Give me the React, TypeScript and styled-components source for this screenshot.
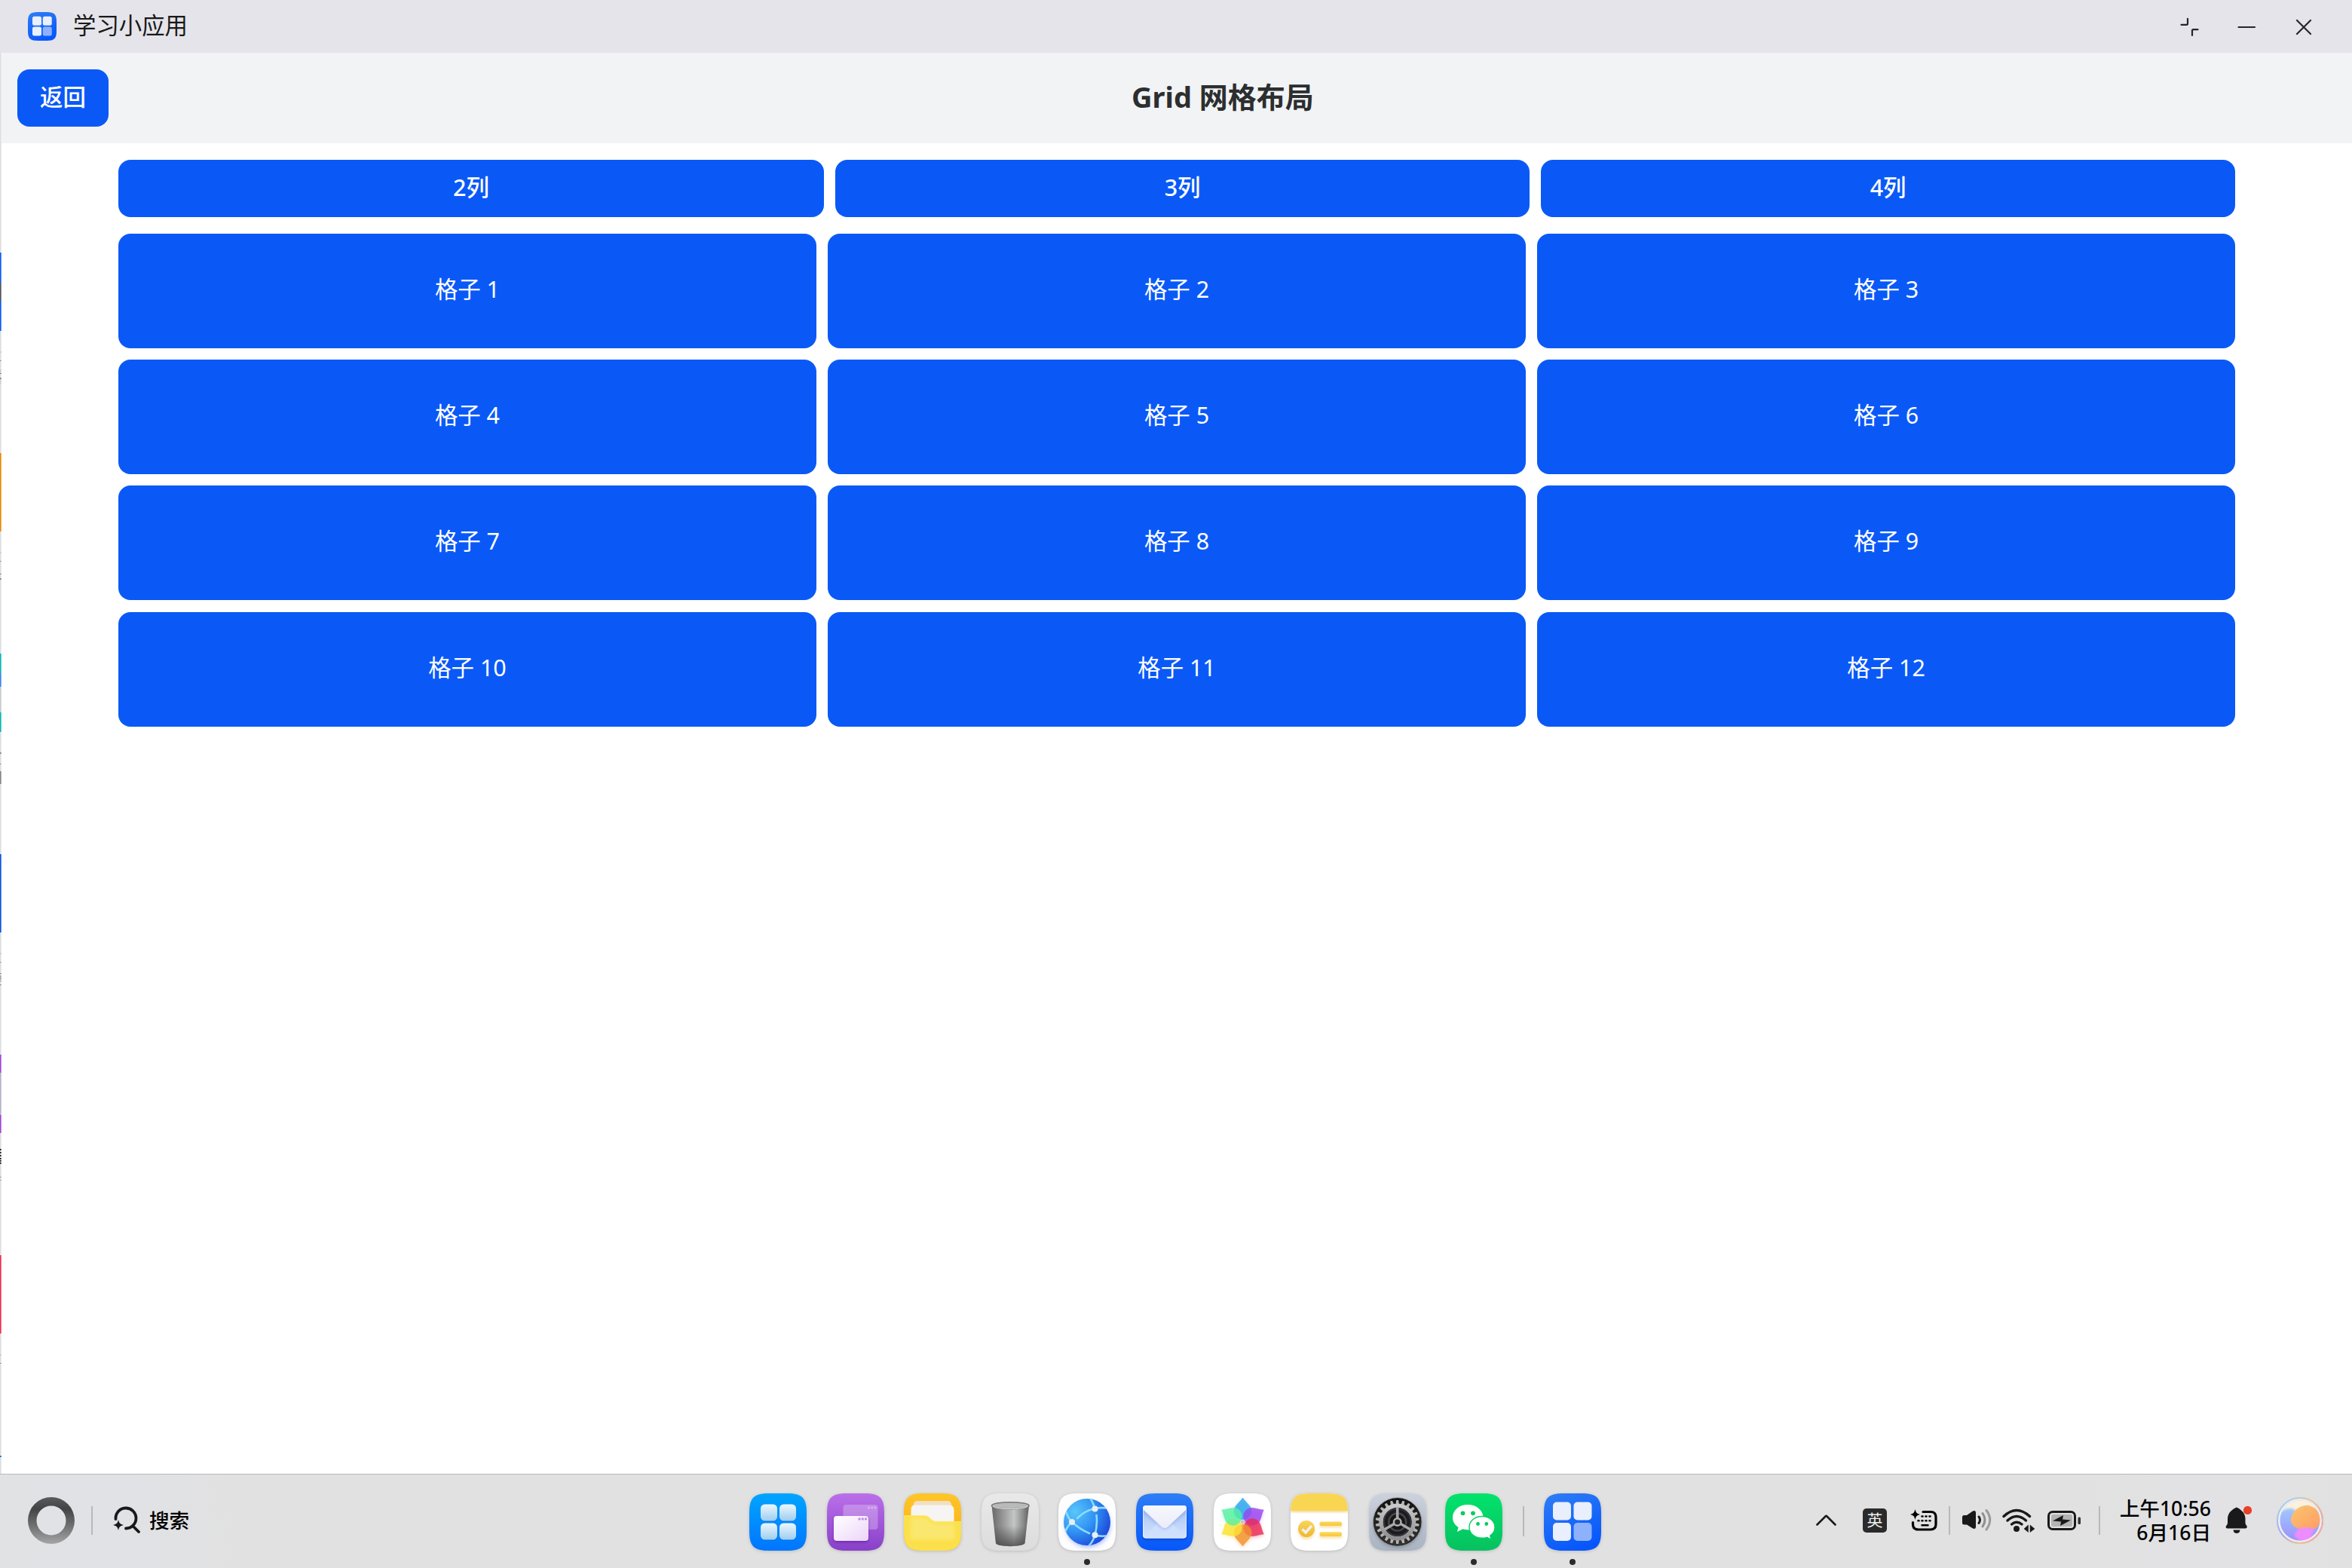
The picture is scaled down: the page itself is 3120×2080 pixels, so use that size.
import React from 'react';
import styled, { createGlobalStyle } from 'styled-components';

const BLUE = '#0a59f7';

const GlobalStyle = createGlobalStyle`
  * { box-sizing: border-box; }
  html, body { margin: 0; padding: 0; }
  body {
    font-family: 'Noto Sans', 'Noto Sans CJK SC', sans-serif;
    background: #fff;
    overflow: hidden;
  }
  svg { display: block; flex: none; }
`;

const Desktop = styled.div`
  width: 3120px;
  height: 2080px;
  display: flex;
  flex-direction: column;
  background: #fff;
`;

const TitleBar = styled.header`
  height: 70px;
  flex: none;
  display: flex;
  align-items: center;
  padding: 0 50px 0 37px;
  background: #e5e4ea;
`;

const AppName = styled.span`
  margin-left: 22px;
  font-size: 30.4px;
  line-height: 40px;
  color: #191919;
  padding-bottom: 3px;
`;

const WindowControls = styled.div`
  margin-left: auto;
  display: flex;
  align-items: center;
  gap: 48px;
  padding-top: 2px;
`;

const WindowBody = styled.div`
  flex: 1;
  min-height: 0;
  display: flex;
`;

const EdgeStrip = styled.div`
  width: 2px;
  flex: none;
  display: flex;
  flex-direction: column;
  background: linear-gradient(to right, #dcdddf 1px, #ebebec 1px);
`;

const EdgeSegment = styled.div<{ $gap: number; $size: number; $color: string }>`
  flex: none;
  margin-top: ${(p) => p.$gap}px;
  height: ${(p) => p.$size}px;
  background: linear-gradient(to right, transparent 1px, rgba(255, 255, 255, 0.35) 1px), ${(p) => p.$color};
`;

const Page = styled.main`
  flex: 1;
  min-width: 0;
  display: flex;
  flex-direction: column;
`;

const PageHeader = styled.div`
  height: 120px;
  flex: none;
  display: flex;
  align-items: center;
  padding: 0 20px 0 21px;
  background: #f1f3f5;
`;

const Button = styled.button<{ $width?: string }>`
  width: ${(p) => p.$width ?? 'auto'};
  height: 76px;
  border: 0;
  border-radius: 16px;
  padding: 0 0 3px;
  background: ${BLUE};
  color: #fff;
  font: 500 30.4px/40px 'Noto Sans', 'Noto Sans CJK SC', sans-serif;
`;

const PageTitle = styled.h1`
  flex: 1;
  margin: 0;
  padding-bottom: 4px;
  text-align: center;
  font-size: 38px;
  line-height: 52px;
  font-weight: 700;
  color: #2c2e2f;
`;

const Content = styled.div`
  padding: 22px 155px 0 155px;
  display: flex;
  flex-direction: column;
  gap: 22px;
`;

const ColumnPicker = styled.div`
  display: grid;
  grid-template-columns: 936px 1fr 1fr;
  column-gap: 15.2px;
`;

const CellGrid = styled.div`
  display: grid;
  grid-template-columns: repeat(3, 1fr);
  grid-auto-rows: 152px;
  gap: 15.2px;
`;

const Cell = styled.div`
  display: flex;
  align-items: center;
  justify-content: center;
  padding-bottom: 4px;
  border-radius: 16px;
  background: ${BLUE};
  color: #fff;
  font-size: 30.4px;
  line-height: 40px;
`;

const Taskbar = styled.footer`
  height: 125px;
  flex: none;
  display: grid;
  grid-template-columns: 994px 1130px 1fr;
  border-top: 1px solid #b9b9bb;
  background: linear-gradient(to right, #e1e2e4 0, #e1e2e6 160px, #e1e1e1 320px, #e1e1e1 2740px, #e2e2e4 2900px, #e2e2e4 3000px, #e1e1e1 3120px);
`;

const TaskbarStart = styled.div`
  display: flex;
  align-items: center;
  padding: 0 0 2px 36px;
`;

const SearchLabel = styled.span`
  margin-left: 11px;
  font-size: 26.6px;
  line-height: 36px;
  font-weight: 500;
  color: #000;
`;

const Divider = styled.div<{ $height?: number; $top?: number; $left?: number; $right?: number }>`
  width: 2px;
  flex: none;
  height: ${(p) => p.$height ?? 38}px;
  margin: ${(p) => `${p.$top ?? 0}px ${p.$right ?? 0}px 0 ${p.$left ?? 0}px`};
  background: #b8b8ba;
`;

const Dock = styled.nav`
  display: flex;
  align-items: flex-start;
  padding-top: 25px;
`;

const DockItem = styled.div<{ $last?: boolean }>`
  width: 76px;
  flex: none;
  margin-right: ${(p) => (p.$last ? 0 : 26.6)}px;
  display: flex;
  flex-direction: column;
  align-items: center;
  svg { overflow: visible; filter: drop-shadow(0 1px 2px rgba(0, 0, 0, 0.16)); }
`;

const RunningDot = styled.i`
  width: 8px;
  height: 8px;
  margin-top: 11px;
  border-radius: 50%;
  background: #2b2b2b;
`;

const Tray = styled.div`
  display: flex;
  align-items: center;
  padding: 0 37px 2px 285px;
`;

const TrayItem = styled.div<{ $left: number }>`
  flex: none;
  margin-left: ${(p) => p.$left}px;
`;

const ImeBadge = styled.div`
  width: 32px;
  height: 32px;
  border-radius: 5px;
  background: #2a2a2a;
  color: #f0f0f0;
  font-size: 21px;
  line-height: 31px;
  text-align: center;
`;

const Clock = styled.div`
  width: 147px;
  flex: none;
  margin-right: 1px;
  text-align: right;
  font-size: 26.6px;
  line-height: 32px;
  font-weight: 500;
  color: #000;
  white-space: nowrap;
`;

const SQUIRCLE =
  'M0 26C0 6 6 0 26 0H50C70 0 76 6 76 26V50C76 70 70 76 50 76H26C6 76 0 70 0 50Z';

function Gradient({ id, from, to, diagonal }: { id: string; from: string; to: string; diagonal?: boolean }) {
  return (
    <linearGradient id={id} x1="0" y1="0" x2={diagonal ? 1 : 0} y2="1">
      <stop offset="0" stopColor={from} />
      <stop offset="1" stopColor={to} />
    </linearGradient>
  );
}

function LearningIcon({ size, id }: { size: number; id: string }) {
  return (
    <svg width={size} height={size} viewBox="0 0 76 76">
      <defs>
        <linearGradient id={id} x1="0.2" y1="0" x2="0.6" y2="1">
          <stop offset="0" stopColor="#2d7bf5" />
          <stop offset="1" stopColor="#0656fb" />
        </linearGradient>
      </defs>
      <path d={SQUIRCLE} fill={`url(#${id})`} />
      <g fill="#e9effd">
        <rect x="12" y="11.5" width="24" height="24" rx="5" />
        <rect x="39.5" y="11.5" width="24" height="24" rx="5" />
        <rect x="12" y="39" width="24" height="24" rx="5" />
        <rect x="39.5" y="39" width="24" height="24" rx="5" fill="#8db2fb" />
      </g>
    </svg>
  );
}

function LauncherIcon() {
  return (
    <svg width="76" height="76" viewBox="0 0 76 76">
      <defs>
        <Gradient id="launch-bg" from="#00a5ff" to="#0075ff" />
        <Gradient id="launch-tile" from="#edf7fd" to="#9ccdf0" />
      </defs>
      <path d={SQUIRCLE} fill="url(#launch-bg)" />
      {[15, 40].map((x) =>
        [14.5, 39.5].map((y) => (
          <g key={`${x}-${y}`}>
            <rect x={x} y={y + 1.5} width="22" height="22" rx="5.5" fill="#0060d8" opacity="0.3" />
            <rect x={x} y={y} width="22" height="22" rx="5.5" fill="url(#launch-tile)" />
          </g>
        )),
      )}
    </svg>
  );
}

function WindowsIcon() {
  return (
    <svg width="76" height="76" viewBox="0 0 76 76">
      <defs>
        <Gradient id="win-bg" from="#bb70ea" to="#8840c8" />
        <Gradient id="win-front" from="#ffffff" to="#ecd4f8" diagonal />
        <filter id="win-blur" x="-20%" y="-20%" width="140%" height="150%">
          <feGaussianBlur stdDeviation="1.5" />
        </filter>
      </defs>
      <path d={SQUIRCLE} fill="url(#win-bg)" />
      <rect x="21.5" y="15" width="46" height="33" rx="4" fill="#fff" opacity="0.25" />
      <g fill="#fff" opacity="0.3">
        <circle cx="55.5" cy="19" r="1.7" /><circle cx="59.8" cy="19" r="1.7" /><circle cx="64" cy="19" r="1.7" />
      </g>
      <rect x="9" y="32" width="46" height="33" rx="4" fill="#5b1a9c" opacity="0.6" filter="url(#win-blur)" />
      <rect x="9" y="30" width="46" height="33" rx="4" fill="url(#win-front)" />
      <g fill="#c08ae6">
        <circle cx="43" cy="34" r="1.7" /><circle cx="47.3" cy="34" r="1.7" /><circle cx="51.5" cy="34" r="1.7" />
      </g>
    </svg>
  );
}

function FilesIcon() {
  return (
    <svg width="76" height="76" viewBox="0 0 76 76">
      <defs>
        <Gradient id="file-bg" from="#ffc526" to="#f9ac18" />
        <clipPath id="file-clip"><path d={SQUIRCLE} /></clipPath>
        <filter id="file-blur"><feGaussianBlur stdDeviation="2.5" /></filter>
      </defs>
      <g clipPath="url(#file-clip)">
        <rect width="76" height="76" fill="url(#file-bg)" />
        <path d="M12 20C12.500 12 14 10 18 10H58C62 10 63 13 63.500 17V30H12Z" fill="#f1dfc4" />
        <path d="M9.500 21Q9.500 15.500 15 15.500H60Q66.500 15.500 66.500 22V50H9.500Z" fill="#f6f5f3" />
        <path d="M0 29.500H27C35 29.500 35 37.500 42 37.500H76V76H0Z" fill="#fbe04b" />
        <path d="M9 32H27C33 32 34 40 42 40H67V61H9Z" fill="#fbe978" opacity="0.8" filter="url(#file-blur)" />
        <path d="M0 29.800H27C35 29.800 35 37.800 42 37.800H76" fill="none" stroke="#fdea5c" strokeWidth="1.2" />
      </g>
    </svg>
  );
}

function TrashIcon() {
  return (
    <svg width="76" height="76" viewBox="0 0 76 76">
      <defs>
        <linearGradient id="bin-body" x1="0" x2="1">
          <stop offset="0" stopColor="#686868" /><stop offset="0.25" stopColor="#8f8f8f" />
          <stop offset="0.6" stopColor="#c4c5c5" /><stop offset="0.85" stopColor="#8a8a8a" />
          <stop offset="1" stopColor="#606060" />
        </linearGradient>
        <linearGradient id="bin-shade" x1="0" y1="0" x2="0" y2="1">
          <stop offset="0.5" stopColor="#444" stopOpacity="0" /><stop offset="1" stopColor="#444" stopOpacity="0.8" />
        </linearGradient>
        <Gradient id="bin-bg" from="#e9e9e9" to="#dcdcdc" />
      </defs>
      <path d={SQUIRCLE} fill="url(#bin-bg)" />
      <path d="M13.500 16L19 66C20 71.500 56 71.500 57.500 66L63 16Z" fill="url(#bin-body)" />
      <path d="M13.500 16L19 66C20 71.500 56 71.500 57.500 66L63 16Z" fill="url(#bin-shade)" />
      <ellipse cx="38.300" cy="16.300" rx="24.800" ry="4.600" fill="#b9b9b9" stroke="#77777b" strokeWidth="1.600" />
      <path d="M15 17C20 22 56 22 61.500 17" fill="none" stroke="#e6e6e6" strokeWidth="1" />
    </svg>
  );
}

function BrowserIcon() {
  return (
    <svg width="76" height="76" viewBox="0 0 76 76">
      <defs>
        <radialGradient id="globe" cx="0.24" cy="0.28" r="0.85">
          <stop offset="0" stopColor="#5ac6fb" /><stop offset="0.5" stopColor="#3193f4" /><stop offset="1" stopColor="#1c45d8" />
        </radialGradient>
        <clipPath id="globe-clip"><circle cx="38" cy="38" r="31" /></clipPath>
        <filter id="globe-blur" x="-30%" y="-30%" width="160%" height="160%"><feGaussianBlur stdDeviation="3" /></filter>
        <clipPath id="globe-tile"><path d={SQUIRCLE} /></clipPath>
      </defs>
      <path d={SQUIRCLE} fill="#fdfdfd" />
      <g clipPath="url(#globe-tile)">
        <circle cx="39" cy="42" r="29" fill="#5a7cff" opacity="0.6" filter="url(#globe-blur)" />
      </g>
      <circle cx="38" cy="38" r="31" fill="url(#globe)" />
      <g clipPath="url(#globe-clip)" fill="none" stroke="#8adcfb" strokeWidth="2.600" strokeLinecap="round">
        <path d="M25 33Q35 23 47 20.500Q58 18 66 20" />
        <path d="M42 6Q46 12 48.500 20" />
        <path d="M10 24Q13 33 18 38Q29 48 41 53" />
        <path d="M18 38Q12 43 9 51" />
        <path d="M50.500 29Q52 42 48.500 55Q46 64 40 70" />
        <path d="M48.500 55Q56 58 66 56" />
      </g>
      <g fill="#e9eef2"><circle cx="48.500" cy="20.500" r="4" /><circle cx="18" cy="38" r="4" /><circle cx="48.500" cy="55.300" r="4" /></g>
    </svg>
  );
}

function MailIcon() {
  return (
    <svg width="76" height="76" viewBox="0 0 76 76">
      <defs>
        <Gradient id="mail-bg" from="#2e7ef6" to="#0657fa" />
        <Gradient id="mail-body" from="#a4bff6" to="#d5e5fc" />
        <Gradient id="mail-flap" from="#f7f8fd" to="#ebecf7" />
        <clipPath id="mail-clip"><rect x="9" y="16" width="58" height="43.500" rx="4" /></clipPath>
        <filter id="mail-blur" x="-20%" y="-20%" width="140%" height="150%"><feGaussianBlur stdDeviation="1.500" /></filter>
      </defs>
      <path d={SQUIRCLE} fill="url(#mail-bg)" />
      <rect x="9" y="18" width="58" height="43.500" rx="4" fill="#0136b8" opacity="0.6" filter="url(#mail-blur)" />
      <g clipPath="url(#mail-clip)">
        <rect x="9" y="16" width="58" height="44" fill="url(#mail-body)" />
        <path d="M9 59.500L31 37H45L67 59.500Z" fill="#cfe0fc" />
        <path d="M8 25L33 46.500Q38 50 43 46.500L68 25V20H8Z" fill="#7f9de8" opacity="0.35" filter="url(#mail-blur)" />
        <path d="M8 16H68V20L43 43.500Q38 48.500 33 43.500L8 20Z" fill="url(#mail-flap)" />
      </g>
      <rect x="9.500" y="16.500" width="57" height="42.500" rx="3.500" fill="none" stroke="#eaf1ff" strokeOpacity="0.8" />
    </svg>
  );
}

function GalleryIcon() {
  const petals = ['#28a5ee', '#9a45ee', '#ea2c56', '#f3922c', '#fbe234', '#58f0a4'];
  const petal =
    'M38.500 6C40.500 9.500 44.500 12.500 47.500 16.500C53 24 49 34.500 38.500 34.500C28 34.500 24 24 29.500 16.500C32.500 12.500 36.500 9.500 38.500 6Z';
  return (
    <svg width="76" height="76" viewBox="0 0 76 76">
      <defs>
        <filter id="petal-glow" x="-30%" y="-30%" width="160%" height="160%"><feGaussianBlur stdDeviation="2.500" /></filter>
      </defs>
      <path d={SQUIRCLE} fill="#fff" />
      <g opacity="0.35" filter="url(#petal-glow)" transform="translate(0 2)">
        {petals.map((c, i) => <path key={c} d={petal} fill={c} transform={`rotate(${i * 60} 38.500 38)`} />)}
      </g>
      {petals.map((c, i) => (
        <path key={c} d={petal} fill={c} fillOpacity="0.8" stroke={c} strokeOpacity="0.5" strokeWidth="1" strokeLinejoin="round" transform={`rotate(${i * 60} 38.500 38)`} />
      ))}
      <circle cx="38.500" cy="38" r="2.800" fill="#d5c3ba" />
    </svg>
  );
}

function NotesIcon() {
  return (
    <svg width="76" height="76" viewBox="0 0 76 76">
      <defs>
        <clipPath id="note-clip"><path d={SQUIRCLE} /></clipPath>
        <Gradient id="note-dot" from="#f9d75a" to="#f0b631" />
        <Gradient id="note-line" from="#fbd95a" to="#f8c63c" />
        <filter id="note-blur" x="-30%" y="-60%" width="160%" height="300%"><feGaussianBlur stdDeviation="1.800" /></filter>
      </defs>
      <g clipPath="url(#note-clip)">
        <rect width="76" height="76" fill="#fff" />
        <rect y="4" width="76" height="21" fill="#f0cf78" opacity="0.8" filter="url(#note-blur)" />
        <rect width="76" height="23" fill="#f8d651" />
      </g>
      <g fill="#f5c95a" opacity="0.5" filter="url(#note-blur)">
        <circle cx="21" cy="50" r="11" /><rect x="38.500" y="40" width="29.500" height="5.500" /><rect x="38.500" y="54" width="29.500" height="5.500" />
      </g>
      <circle cx="21" cy="47" r="11" fill="url(#note-dot)" />
      <path d="M15.500 47.500L20 52L28 43" fill="none" stroke="#eef0ee" strokeWidth="3.600" />
      <rect x="38.500" y="37.500" width="29.500" height="5.600" rx="2.800" fill="url(#note-line)" />
      <rect x="38.500" y="51.300" width="29.500" height="5.600" rx="2.800" fill="url(#note-line)" />
    </svg>
  );
}

function SettingsIcon() {
  const teeth = Array.from({ length: 22 }, (_, i) => i * (360 / 22));
  return (
    <svg width="76" height="76" viewBox="0 0 76 76">
      <defs>
        <Gradient id="set-bg" from="#ccd2dd" to="#a9b3c2" />
        <Gradient id="set-ring" from="#c9c9c9" to="#8f8f8f" />
        <Gradient id="set-disc" from="#111111" to="#343434" />
        <filter id="set-blur"><feGaussianBlur stdDeviation="2" /></filter>
      </defs>
      <g transform="translate(1.2 0)">
        <path d={SQUIRCLE} fill="url(#set-bg)" />
        <circle cx="37.500" cy="40" r="32" fill="#5d6a80" opacity="0.5" filter="url(#set-blur)" />
        <circle cx="37.500" cy="38" r="32.300" fill="url(#set-disc)" stroke="#a8a698" strokeWidth="0.800" />
        <g fill="#b5b5b5">
          {teeth.map((a) => (
            <path key={a} d="M35.300 15L36 9H39L39.700 15Z" transform={`rotate(${a} 37.500 38)`} />
          ))}
        </g>
        <circle cx="37.500" cy="38" r="21.700" fill="#1c1c20" stroke="url(#set-ring)" strokeWidth="5.500" />
        <circle cx="37.500" cy="38" r="17.800" fill="none" stroke="#34343d" strokeWidth="2" />
        <circle cx="37.500" cy="38" r="11.500" fill="#161616" stroke="#45454a" strokeWidth="2.500" />
        <g stroke="#a9a9a9" strokeWidth="3.600">
          {[0, 120, 240].map((a) => <path key={a} d="M37.500 33V18" transform={`rotate(${a} 37.500 38)`} />)}
        </g>
        <circle cx="37.500" cy="38" r="4.800" fill="#222" stroke="#b0b0b0" strokeWidth="2.400" />
      </g>
    </svg>
  );
}

function ChatIcon() {
  return (
    <svg width="76" height="76" viewBox="0 0 76 76">
      <defs><Gradient id="chat-bg" from="#02e36c" to="#07c160" /></defs>
      <path d={SQUIRCLE} fill="url(#chat-bg)" />
      <path d="M30 15C18.500 15 10 22.500 10 32C10 37.500 13 42 17.500 45L16 51L23.500 47.300C25.500 48 28 48.400 31 48.400C42 48.400 50.500 41 50.500 32C50.500 22.500 41.500 15 30 15Z" fill="#fff" />
      <path d="M49 30.500C39 30.500 32 37 32 45C32 53 39 59.300 49 59.300C51.500 59.300 53.700 59 55.500 58.300L61 61.300L59.700 56C63.700 53.500 66 49.500 66 45C66 37 59 30.500 49 30.500Z" fill="#fff" stroke="#08cf65" strokeWidth="1.400" />
      <g fill="#06cc62">
        <circle cx="23.500" cy="26.300" r="2.900" /><circle cx="37" cy="26.300" r="2.900" />
        <circle cx="43.500" cy="40.500" r="2.400" /><circle cx="54.800" cy="40.500" r="2.400" />
      </g>
    </svg>
  );
}

function AssistantRing() {
  return (
    <svg width="64" height="64" viewBox="0 0 64 64">
      <defs>
        <linearGradient id="ring" x1="0" y1="0" x2="0" y2="1">
          <stop offset="0" stopColor="#5a5b5d" /><stop offset="0.250" stopColor="#434446" />
          <stop offset="0.600" stopColor="#6d6e70" /><stop offset="1" stopColor="#a5a5a8" />
        </linearGradient>
      </defs>
      <path fillRule="evenodd" fill="url(#ring)" d="M32 1a31 31 0 1 0 0 62a31 31 0 1 0 0-62ZM32 12.500a19.500 19.500 0 1 1 0 39a19.500 19.500 0 1 1 0-39Z" />
    </svg>
  );
}

function SearchIcon() {
  return (
    <svg width="38" height="38" viewBox="0 0 38 38">
      <g fill="none" stroke="#191919" strokeWidth="3.800" strokeLinecap="round">
        <path d="M4.500 17A13.500 13.500 0 1 1 18 29.500" />
        <path d="M27.500 26.500L35 34" />
      </g>
      <path d="M8 18C9 22.500 10.500 24 15 25C10.500 26 9 27.500 8 32C7 27.500 5.500 26 1 25C5.500 24 7 22.500 8 18Z" fill="#191919" />
    </svg>
  );
}

function KeyboardIcon() {
  return (
    <svg width="36" height="30" viewBox="0 0 36 30">
      <path d="M17 3.500H27Q34 3.500 34 10.500V20Q34 27 27 27H11Q3.500 27 3.500 20V17.500" fill="none" stroke="#000" strokeWidth="3.200" strokeLinecap="round" />
      <path d="M6.500 0C7.500 4.500 8.500 5.700 13 6.900C8.500 8.100 7.500 9.300 6.500 14C5.500 9.300 4.500 8.100 0 6.900C4.500 5.700 5.500 4.500 6.500 0Z" />
      <g stroke="#000" strokeWidth="2.600" strokeLinecap="round">
        <path d="M15.500 9.500H16.500M20.500 9.500H21.500M25.500 9.500H26.500M10.500 15.200H11.500M15.500 15.200H16.500M20.500 15.200H21.500M25.500 15.200H26.500M15.500 21.200H23.500" fill="none" />
      </g>
    </svg>
  );
}

function SpeakerIcon() {
  return (
    <svg width="40" height="32" viewBox="0 0 40 32">
      <path d="M2.500 9H6L14 3.500Q18 2 18 6V24Q18 28 14 26.500L6 21.500H2.500Q0 21.500 0 19V11.500Q0 9 2.500 9Z" fill="#191919" />
      <g fill="none" strokeWidth="3" strokeLinecap="round">
        <path d="M22 11Q25 15 22 19.500" stroke="#191919" />
        <path d="M27 6.500Q33 15 27 24" stroke="#8e8e8e" />
        <path d="M32 2.500Q41.500 15 32 28" stroke="#9b9b9b" />
      </g>
    </svg>
  );
}

function WifiIcon() {
  return (
    <svg width="44" height="32" viewBox="0 0 44 32">
      <g fill="none" stroke="#191919" strokeWidth="3.400" strokeLinecap="round">
        <path d="M2 10.500Q19 -5.500 36.500 10.500" />
        <path d="M7 16Q19 5 31.500 16" />
        <path d="M12.500 21Q19 15.500 26 21" />
      </g>
      <circle cx="19" cy="27" r="4" fill="#191919" />
      <path d="M29 27L34.500 22V31.500ZM43 27L37 22V31.500Z" fill="#191919" stroke="#191919" strokeWidth="0.500" />
    </svg>
  );
}

function BatteryIcon() {
  return (
    <svg width="46" height="26" viewBox="0 0 46 26">
      <rect x="1.500" y="1.500" width="35" height="23" rx="5.500" fill="none" stroke="#191919" strokeWidth="3" />
      <rect x="5" y="5" width="28" height="16" rx="2.500" fill="#b3b3b3" />
      <path d="M7 13.500L21 6L20 11.500L31 12.500L17 20L18 14.500Z" fill="#191919" />
      <rect x="40.500" y="8.500" width="3.500" height="9.500" rx="1.500" fill="#333" />
    </svg>
  );
}

function BellIcon() {
  return (
    <svg width="36" height="38" viewBox="0 0 36 38">
      <path d="M15 1.500Q11 3 8.500 5.500Q3.500 9.500 3 16V22Q3 24 1.500 25.500Q-0.500 28.500 2 29.500H27Q30 28.500 28 25.500Q26.500 24 26.500 22V16Q26 9.500 21 5.500Q18.500 3 15 1.500Z" fill="#191919" />
      <path d="M10.500 31.500H19.500Q19 36 15 36Q11 36 10.500 31.500Z" fill="#191919" />
      <circle cx="29.500" cy="5.500" r="5.600" fill="#ea4028" />
    </svg>
  );
}

function OrbIcon() {
  return (
    <svg width="62" height="62" viewBox="0 0 62 62">
      <defs>
        <linearGradient id="orb-rim" x1="0.200" y1="0.100" x2="0.700" y2="1">
          <stop offset="0" stopColor="#a9cdea" /><stop offset="0.600" stopColor="#9fa5f3" /><stop offset="1" stopColor="#d79de6" />
        </linearGradient>
        <linearGradient id="orb-rim-warm" x1="0" y1="0" x2="1" y2="0.300">
          <stop offset="0.300" stopColor="#efc98d" stopOpacity="0" /><stop offset="0.700" stopColor="#efc98d" /><stop offset="1" stopColor="#efaf9f" />
        </linearGradient>
        <Gradient id="orb-blue" from="#a2dcff" to="#9a8afa" />
        <Gradient id="orb-orange" from="#fbc66c" to="#ff9c66" diagonal />
        <clipPath id="orb-clip"><circle cx="31" cy="31" r="26.500" /></clipPath>
        <filter id="orb-blur" x="-30%" y="-30%" width="160%" height="160%"><feGaussianBlur stdDeviation="1.600" /></filter>
        <filter id="orb-soft" x="-10%" y="-10%" width="120%" height="120%"><feGaussianBlur stdDeviation="0.600" /></filter>
      </defs>
      <circle cx="31" cy="31" r="30" fill="#eeeeef" stroke="url(#orb-rim)" strokeWidth="2" />
      <circle cx="31" cy="31" r="30" fill="none" stroke="url(#orb-rim-warm)" strokeWidth="2" />
      <g clipPath="url(#orb-clip)">
        <rect width="62" height="62" fill="url(#orb-blue)" />
        <path d="M4 20Q10 2 32 2Q52 4 58 20L42 12Q31 12 26 19Q20 10 4 20Z" fill="#fdf1dc" filter="url(#orb-blur)" />
        <path d="M19 31C18 22 28 12 39 11C52 11 60 22 57 34C55 43 48 43 41 41C32 45 20 40 19 31Z" fill="url(#orb-orange)" filter="url(#orb-soft)" />
        <path d="M24 52C24 42 32 38 50 42L44 58Q30 60 24 52Z" fill="#ee8cff" filter="url(#orb-blur)" />
      </g>
    </svg>
  );
}

const columnOptions = ['2列', '3列', '4列'];
const cells = Array.from({ length: 12 }, (_, i) => `格子 ${i + 1}`);

const EDGE_TOP = 70;

// [top, height, color] of what the window behind leaves visible at the screen edge
const edgeMarks: [number, number, string][] = [
  [335, 40, BLUE], [375, 24, '#51525c'], [399, 40, BLUE],
  [466, 2, '#c8c8c8'], [478, 1, '#8a8a8a'], [490, 5, '#cdcdcd'], [495, 1, '#707070'], [501, 2, '#808080'], [503, 7, '#cfcfcf'],
  [601, 104, '#ed8600'],
  [732, 2, '#c8c8c8'], [744, 1, '#8a8a8a'], [761, 1, '#707070'], [767, 2, '#808080'],
  [867, 26, '#07b9b5'], [893, 18, '#3c83f0'], [911, 34, '#c5caca'], [945, 26, '#07b9b5'],
  [998, 2, '#808080'], [1013, 1, '#8a8a8a'], [1023, 17, '#858585'],
  [1133, 104, '#0c52e2'],
  [1264, 2, '#c8c8c8'], [1276, 1, '#8a8a8a'], [1291, 1, '#707070'], [1294, 6, '#a8a8a8'], [1301, 1, '#909090'], [1306, 1, '#707070'],
  [1399, 24, '#a445d8'], [1423, 56, '#b3b3c6'], [1479, 24, '#a445d8'],
  [1524, 2, '#222222'], [1528, 2, '#222222'], [1532, 2, '#222222'], [1536, 2, '#222222'], [1539, 2, '#222222'], [1542, 2, '#222222'],
  [1561, 1, '#909090'], [1565, 1, '#909090'],
  [1665, 104, '#f02c50'],
  [1797, 1, '#b0b0b0'], [1808, 1, '#8a8a8a'],
  [1931, 2, BLUE],
];

const dockApps = [
  { name: 'launcher', icon: <LauncherIcon /> },
  { name: 'windows', icon: <WindowsIcon /> },
  { name: 'files', icon: <FilesIcon /> },
  { name: 'trash', icon: <TrashIcon /> },
  { name: 'browser', icon: <BrowserIcon />, running: true },
  { name: 'mail', icon: <MailIcon /> },
  { name: 'gallery', icon: <GalleryIcon /> },
  { name: 'notes', icon: <NotesIcon /> },
  { name: 'settings', icon: <SettingsIcon /> },
  { name: 'chat', icon: <ChatIcon />, running: true },
];

export default function App() {
  return (
    <>
      <GlobalStyle />
      <Desktop>
        <TitleBar>
          <LearningIcon size={38} id="learn-title" />
          <AppName>学习小应用</AppName>
          <WindowControls>
            <svg width="28" height="28" viewBox="0 0 28 28" fill="none" stroke="#262628" strokeWidth="2.200" strokeLinecap="round" strokeLinejoin="round">
              <path d="M3.500 10.800H10.500Q12 10.800 12 9.300V2.800M25.500 17.200H19.500Q18 17.200 18 18.700V25" />
            </svg>
            <svg width="28" height="28" viewBox="0 0 28 28" stroke="#262628" strokeWidth="2.200" strokeLinecap="round">
              <path d="M3.500 14H25" />
            </svg>
            <svg width="28" height="28" viewBox="0 0 28 28" stroke="#262628" strokeWidth="2.200" strokeLinecap="round">
              <path d="M5 5L23 23M23 5L5 23" />
            </svg>
          </WindowControls>
        </TitleBar>
        <WindowBody>
          <EdgeStrip>
            {edgeMarks.map(([top, size, color], i) => {
              const previous = edgeMarks[i - 1];
              const from = previous ? previous[0] + previous[1] : EDGE_TOP;
              return <EdgeSegment key={top} $gap={top - from} $size={size} $color={color} />;
            })}
          </EdgeStrip>
          <Page>
            <PageHeader>
              <Button $width="121px">返回</Button>
              <PageTitle>Grid 网格布局</PageTitle>
            </PageHeader>
            <Content>
              <ColumnPicker>
                {columnOptions.map((label) => <Button key={label}>{label}</Button>)}
              </ColumnPicker>
              <CellGrid>
                {cells.map((label) => <Cell key={label}>{label}</Cell>)}
              </CellGrid>
            </Content>
          </Page>
        </WindowBody>
        <Taskbar>
          <TaskbarStart>
            <AssistantRing />
            <Divider $left={21} $right={26} />
            <SearchIcon />
            <SearchLabel>搜索</SearchLabel>
          </TaskbarStart>
          <Dock>
            {dockApps.map((app) => (
              <DockItem key={app.name}>
                {app.icon}
                {app.running && <RunningDot />}
              </DockItem>
            ))}
            <Divider $height={40} $top={17} $right={26} />
            <DockItem $last>
              <LearningIcon size={76} id="learn-dock" />
              <RunningDot />
            </DockItem>
          </Dock>
          <Tray>
            <svg width="28" height="18" viewBox="0 0 28 18" fill="none" stroke="#191919" strokeWidth="2.600" strokeLinecap="round" strokeLinejoin="round">
              <path d="M1.500 14.500L12.500 3.500Q13.500 2.500 14.500 3.500L25.500 14.500" />
            </svg>
            <TrayItem $left={34}><ImeBadge>英</ImeBadge></TrayItem>
            <TrayItem $left={31}><KeyboardIcon /></TrayItem>
            <Divider $left={15} />
            <TrayItem $left={16}><SpeakerIcon /></TrayItem>
            <TrayItem $left={13}><WifiIcon /></TrayItem>
            <TrayItem $left={16}><BatteryIcon /></TrayItem>
            <Divider $left={22} />
            <Clock>上午10:56<br />6月16日</Clock>
            <TrayItem $left={18}><BellIcon /></TrayItem>
            <TrayItem $left={32}><OrbIcon /></TrayItem>
          </Tray>
        </Taskbar>
      </Desktop>
    </>
  );
}
